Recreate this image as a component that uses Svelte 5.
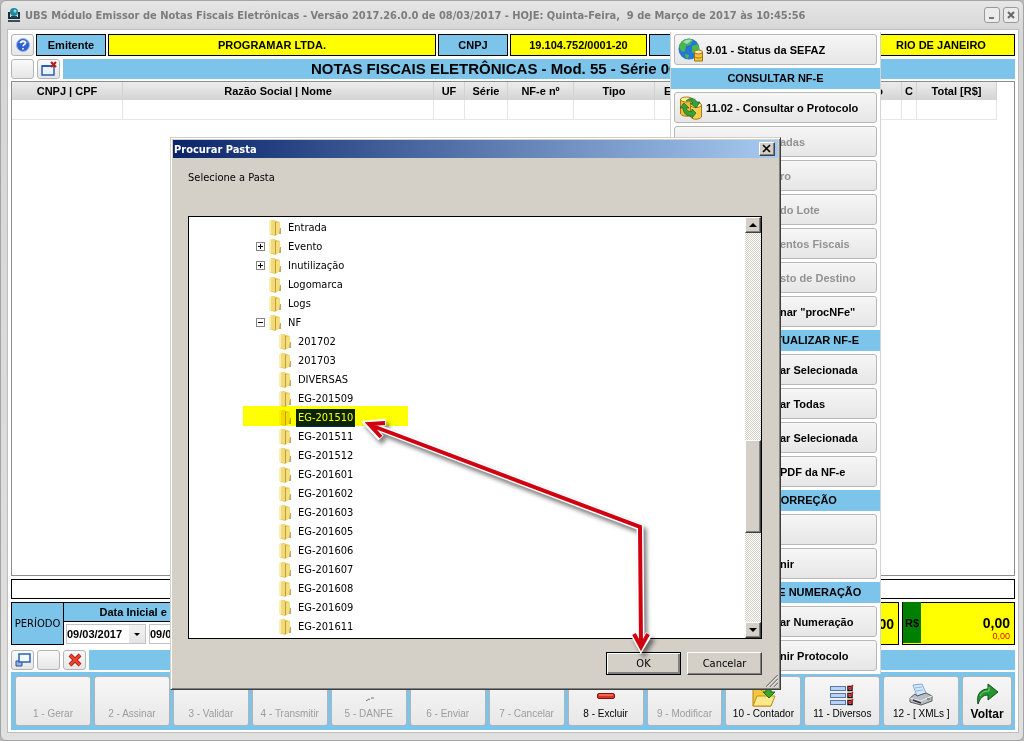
<script lang="ts">
	/**
	 * NF-e issuer main window
	 *
	 * Invoice grid with the side menu open and the folder picker on top.
	 */

	type Folder = { name: string; level: number; toggle?: '+' | '-' };

	const columns = [
		{ label: 'CNPJ | CPF', width: 111 },
		{ label: 'Razão Social | Nome', width: 0 },
		{ label: 'UF', width: 31 },
		{ label: 'Série', width: 43 },
		{ label: 'NF-e nº', width: 66 },
		{ label: 'Tipo', width: 81 },
		{ label: 'Emissão', width: 64 },
		{ label: 'Situação', width: 183, end: true },
		{ label: 'C', width: 15 },
		{ label: 'Total [R$]', width: 80 }
	];

	// Side menu: headings split the commands into groups
	const menu = [
		{ label: '9.01 - Status da SEFAZ', icon: 'globe' },
		{ heading: 'CONSULTAR NF-E' },
		{ label: '11.02 - Consultar o Protocolo', icon: 'sync' },
		{ label: 'adas', disabled: true },
		{ label: 'ro', disabled: true },
		{ label: 'do Lote', disabled: true },
		{ label: 'entos Fiscais', disabled: true },
		{ label: 'sto de Destino', disabled: true },
		{ label: 'nar "procNFe"' },
		{ heading: 'CONSULTAR / ATUALIZAR NF-E' },
		{ label: 'ar Selecionada' },
		{ label: 'ar Todas' },
		{ label: 'ar Selecionada' },
		{ label: 'PDF da NF-e' },
		{ heading: 'CARTA DE CORREÇÃO' },
		{ label: '' },
		{ label: 'nir' },
		{ heading: 'INUTILIZAÇÃO DE NUMERAÇÃO' },
		{ label: 'ar Numeração' },
		{ label: 'nir Protocolo' }
	];

	const actions = [
		{ label: '1 - Gerar', disabled: true },
		{ label: '2 - Assinar', disabled: true },
		{ label: '3 - Validar', disabled: true },
		{ label: '4 - Transmitir', disabled: true },
		{ label: '5 - DANFE', disabled: true, icon: 'danfe' },
		{ label: '6 - Enviar', disabled: true },
		{ label: '7 - Cancelar', disabled: true },
		{ label: '8 - Excluir', icon: 'minus' },
		{ label: '9 - Modificar', disabled: true },
		{ label: '10 - Contador', icon: 'folder' },
		{ label: '11 - Diversos', icon: 'checks' },
		{ label: '12 - [ XMLs ]', icon: 'printer' }
	];

	const folders: Folder[] = [
		{ name: 'Entrada', level: 1 },
		{ name: 'Evento', level: 1, toggle: '+' },
		{ name: 'Inutilização', level: 1, toggle: '+' },
		{ name: 'Logomarca', level: 1 },
		{ name: 'Logs', level: 1 },
		{ name: 'NF', level: 1, toggle: '-' },
		...[
			'201702', '201703', 'DIVERSAS', 'EG-201509', 'EG-201510', 'EG-201511',
			'EG-201512', 'EG-201601', 'EG-201602', 'EG-201603', 'EG-201605', 'EG-201606',
			'EG-201607', 'EG-201608', 'EG-201609', 'EG-201611', ''
		].map((name) => ({ name, level: 2 }))
	];

	let selected = $state('EG-201510');
</script>

<div class="window">
	<header class="titlebar">
		<svg class="app-icon" viewBox="0 0 12 14" aria-hidden="true">
			<path d="M0 4h2v5h8V4h2v7H0z" fill="#1c2f3d" />
			<circle cx="6" cy="4" r="4" fill="#1d8a9c" />
			<circle cx="7" cy="3" r="1.5" fill="#8edbe4" />
			<path d="M3 8h6v2H3z" fill="#1c4658" />
			<path d="M0 12h12v2H0z" fill="#3c4d58" />
		</svg>
		<h1>UBS Módulo Emissor de Notas Fiscais Eletrônicas - Versão 2017.26.0.0 de 08/03/2017 - HOJE: Quinta-Feira,  9 de Março de 2017 às 10:45:56</h1>
		<button class="win-button" aria-label="Minimizar">
			<svg viewBox="0 0 14 14"><path d="M4 10h5" stroke="#777" stroke-width="2" /></svg>
		</button>
		<button class="win-button" aria-label="Fechar">
			<svg viewBox="0 0 14 14"><path d="M4 4l6 6M10 4l-6 6" stroke="#666" stroke-width="2" /></svg>
		</button>
	</header>

	<main class="panel">
		<div class="row issuer">
			<button class="tool" aria-label="Ajuda">
				<svg viewBox="0 0 16 16">
					<circle cx="8" cy="8" r="6.5" fill="#2f62d0" stroke="#9db8ea" />
					<path d="M3 6a6 5 0 0 1 10 0" fill="#7ea4ee" />
					<path d="M5.7 6.3c0-3 4.7-3 4.7-.3 0 1.7-2.3 1.6-2.3 3.3M8 11v1.5" fill="none" stroke="#fff" stroke-width="1.6" />
				</svg>
			</button>
			<div class="cell blue w-label">Emitente</div>
			<div class="cell yellow grow">PROGRAMAR LTDA.</div>
			<div class="cell blue w-label">CNPJ</div>
			<div class="cell yellow w-number">19.104.752/0001-20</div>
			<div class="cell blue w-city-label"></div>
			<div class="cell yellow w-city">RIO DE JANEIRO</div>
		</div>

		<div class="row heading-row">
			<button class="tool" aria-label="Opções"></button>
			<button class="tool" aria-label="Fechar janela">
				<svg viewBox="0 0 18 16">
					<path d="M2 5h12v9H2z" fill="#eaf4ff" stroke="#2a5fb4" stroke-width="1.5" />
					<path d="M2 5h10" stroke="#2a5fb4" stroke-width="2" />
					<path d="M11 1l5 5M16 1l-5 5" stroke="#b41c1c" stroke-width="2.2" />
				</svg>
			</button>
			<h2 class="strip">NOTAS FISCAIS ELETRÔNICAS - Mod. 55 - Série 001</h2>
		</div>

		<div class="grid-box">
			<table>
				<colgroup>
					{#each columns as col}
						<col style:width={col.width ? `${col.width}px` : 'auto'} />
					{/each}
				</colgroup>
				<thead>
					<tr>
						{#each columns as col}
							<th class:end={col.end}>{col.label}</th>
						{/each}
					</tr>
				</thead>
				<tbody>
					<tr>
						{#each columns as _}
							<td></td>
						{/each}
					</tr>
				</tbody>
			</table>
		</div>

		<div class="message"></div>

		<div class="row period">
			<div class="cell blue period-label">PERÍODO</div>
			<div class="dates">
				<div class="dates-title">Data Inicial e Final</div>
				<div class="dates-fields">
					{#each ['Data inicial', 'Data final'] as label}
						<div class="date">
							<select aria-label={label}><option>09/03/2017</option></select>
							<svg viewBox="0 0 6 3" aria-hidden="true"><path d="M0 0h6L3 3z" /></svg>
						</div>
					{/each}
				</div>
			</div>
			<div class="total"><strong>0,00</strong></div>
			<div class="total money">
				<span class="currency">R$</span>
				<strong>0,00</strong>
				<small>0,00</small>
			</div>
		</div>

		<div class="row tools">
			<button class="tool" aria-label="Restaurar">
				<svg viewBox="0 0 18 16">
					<path d="M2 9h6v5H2z" fill="#8fb4e0" stroke="#2a4f94" />
					<path d="M5 2h11v8H5z" fill="#f2f9ff" stroke="#2a62b8" stroke-width="1.5" />
				</svg>
			</button>
			<button class="tool" aria-label="Opções"></button>
			<button class="tool" aria-label="Excluir">
				<svg viewBox="0 0 18 16">
					<path d="M4 3l10 10M14 3L4 13" stroke="#8c1a10" stroke-width="4" />
					<path d="M4 3l10 10M14 3L4 13" stroke="#f0402a" stroke-width="2.5" />
				</svg>
			</button>
			<div class="strip"></div>
		</div>

		<nav class="actions">
			{#each actions as action}
				<button class="action" disabled={action.disabled}>
					{#if action.icon === 'danfe'}
						<svg viewBox="0 0 28 26"><path d="M11 20l3-2 1 .5M16 17h3" fill="none" stroke="#777" /></svg>
					{:else if action.icon === 'minus'}
						<svg viewBox="0 0 28 26">
							<rect x="5.5" y="12.5" width="17" height="5" rx="1.5" fill="#e03020" stroke="#7c1410" />
							<path d="M7 14h14" stroke="#f8a090" />
						</svg>
					{:else if action.icon === 'folder'}
						<svg viewBox="0 0 28 26">
							<path d="M4 25V8h7l2 2h9v15z" fill="#f3c63c" stroke="#b8860b" />
							<path d="M4 25L8 15h18l-4 10z" fill="#fde98a" stroke="#c09018" />
							<path d="M17 5h5v6h4l-6 6-6-6h3z" fill="#3ea82a" stroke="#1d6c14" />
						</svg>
					{:else if action.icon === 'checks'}
						<svg viewBox="0 0 28 26">
							{#each [5, 12, 19] as y}
								<rect x="2.5" y={y + 0.5} width="15" height="4" fill="#b9d2f4" stroke="#5377ae" />
								<rect x="20" y={y + 0.5} width="4" height="4" fill="#fff" stroke="#111" stroke-width="1.5" />
								<path d="M20 {y + 1}l2 2 3-4" fill="none" stroke="#d81818" stroke-width="1.5" />
							{/each}
						</svg>
					{:else if action.icon === 'printer'}
						<svg viewBox="0 0 28 26">
							<path d="M6 4l9-1 4 9-9 3z" fill="#d4e8fb" stroke="#86a9d0" />
							<path d="M8 7l7-1M9 10l7-1" stroke="#8db8e8" />
							<path d="M3 17l5-4 2 2 9-3 6 3v5l-11 4-11-3z" fill="#b9bdc4" stroke="#555b66" />
							<path d="M3 17l11 3 11-5" fill="none" stroke="#eef0f4" />
							<path d="M6 19l8 3" stroke="#333" stroke-width="1.5" />
							<path d="M20 18h3" stroke="#4c9a3c" stroke-width="1.5" />
						</svg>
					{/if}
					<span>{action.label}</span>
				</button>
			{/each}
			<button class="action back">
				<svg viewBox="0 0 28 26">
					<path d="M5 23C3 13 8 8 15 8V3l10 8-10 8v-5c-5 0-8 3-10 9z" fill="#25962f" stroke="#0d4f18" />
					<path d="M7 15c2-4 5-5 9-5V6" fill="none" stroke="#7ed07c" />
				</svg>
				<span>Voltar</span>
			</button>
		</nav>
	</main>

	<aside class="menu">
		{#each menu as item}
			{#if item.heading}
				<h3>{item.heading}</h3>
			{:else}
				<button disabled={item.disabled} class:tail={!item.icon}>
					{#if item.icon === 'globe'}
						<svg viewBox="0 0 26 26">
							<circle cx="11" cy="12" r="10.5" fill="#2477d4" />
							<path d="M1 10C3 3 9 0 15 3l-3 5-4 1-1 5-3 1zM14 9l6-2c2 5 1 8-2 11l-4-3zM7 17l4 1-1 4c-2-1-3-2-3-5z" fill="#4cb648" />
							<path d="M5 5c3-3 7-3 9-2l-5 4z" fill="#c4ecf4" opacity=".7" />
							<path d="M16.5 15v9h8v-9z" fill="#f4c63a" stroke="#a07010" />
							<ellipse cx="20.5" cy="15" rx="4" ry="2" fill="#fff0a0" stroke="#a07010" />
							<path d="M16.5 19.5c2 2 6 2 8 0" fill="none" stroke="#a07010" />
						</svg>
					{:else if item.icon === 'sync'}
						<svg viewBox="0 0 26 26">
							<path d="M2.5 4v15c3 3 9 3 12 0V4z" fill="#f1bf34" stroke="#a8780c" />
							<ellipse cx="8.5" cy="4.5" rx="6" ry="2.5" fill="#fff1a4" stroke="#a8780c" />
							<path d="M12.5 10v12c3 3 8 3 11 0V10z" fill="#f6cf50" stroke="#a8780c" />
							<ellipse cx="18" cy="10" rx="5.5" ry="2.5" fill="#fff1a4" stroke="#a8780c" />
							<path d="M8 6c4-4 9-3 11 1h3l-4 6-6-5h3c-1-2-3-3-7-2zM2 13l4-5 5 5H8c1 3 3 4 6 3v-2l4 4-4 5v-2c-5 1-9-3-9-8z" fill="#3aa03a" stroke="#17611c" stroke-width=".7" />
						</svg>
					{/if}
					<span>{item.label}</span>
				</button>
			{/if}
		{/each}
	</aside>

	<section class="dialog" role="dialog" aria-labelledby="dialog-title">
		<div class="dialog-title">
			<h2 id="dialog-title">Procurar Pasta</h2>
			<button class="classic close" aria-label="Fechar">
				<svg viewBox="0 0 12 10"><path d="M2 1l7 7M9 1L2 8" stroke="#000" stroke-width="1.6" /></svg>
			</button>
		</div>
		<div class="dialog-body">
			<p id="tree-label">Selecione a Pasta</p>
			<div class="tree-box">
				<ul class="tree" aria-labelledby="tree-label">
					{#each folders as folder}
						<li class:child={folder.level === 2} class:marked={folder.name === 'EG-201510'}>
							<span class="toggle">
								{#if folder.toggle}
									<svg viewBox="0 0 9 9">
										<rect x=".5" y=".5" width="8" height="8" fill="#fff" stroke="#848484" />
										<path d={folder.toggle === '+' ? 'M2 4.5h5M4.5 2v5' : 'M2 4.5h5'} stroke="#000" />
									</svg>
								{/if}
							</span>
							<svg class="folder" viewBox="0 0 14 16" aria-hidden="true">
								<path d="M1 1l5-1 2 1 4 1v11l-2 1-3 2-6-2z" fill="#e3c658" />
								<path d="M1 1h2v13H1z" fill="#faf0b4" />
								<path d="M3 1l3-1 1 2v13l-4-1z" fill="#f0da7c" />
								<path d="M8 3l4-1v11l-4 2z" fill="#f4df7c" />
								<path d="M12 8h1v6h-2z" fill="#b9a76c" />
								<path d="M7.5 2v13" stroke="#c39d30" />
							</svg>
							{#if folder.name}
								<button
									class="name"
									class:selected={folder.name === selected}
									onclick={() => (selected = folder.name)}>{folder.name}</button>
							{/if}
						</li>
					{/each}
				</ul>
				<div class="scrollbar">
					<button class="classic" aria-label="Rolar para cima">
						<svg viewBox="0 0 8 4"><path d="M0 4l4-4 4 4z" /></svg>
					</button>
					<div class="track-before"></div>
					<div class="classic thumb"></div>
					<div class="track-after"></div>
					<button class="classic" aria-label="Rolar para baixo">
						<svg viewBox="0 0 8 4"><path d="M0 0h8L4 4z" /></svg>
					</button>
				</div>
			</div>
			<div class="dialog-buttons">
				<button class="classic default">OK</button>
				<button class="classic">Cancelar</button>
			</div>
		</div>
		<svg class="grip" viewBox="0 0 12 12" aria-hidden="true">
			<path d="M0 12L12 0M4 12l8-8M8 12l4-4" stroke="#808080" stroke-width="1.5" />
			<path d="M1 12L12 1M5 12l7-7M9 12l3-3" stroke="#fff" stroke-width=".7" />
		</svg>
		<svg class="arrow" viewBox="0 0 300 250" aria-hidden="true">
			<g class="arrow-shape" fill="none">
				<path d="M8 13L280 116 281 234M26 11L8 13l13 14M274 223l7 13 8-13" stroke="#fff" stroke-width="7" />
				<path d="M10 14L280 116 281 234M25 12L9 13l12 13M274 223l7 13 7-13" stroke="#d00010" stroke-width="4" />
			</g>
		</svg>
	</section>
</div>

<style>
	:global(body) {
		margin: 0;
		background: #b8b8b8;
	}

	.window {
		--blue: #7cc4ea;
		position: relative;
		display: flex;
		flex-direction: column;
		box-sizing: border-box;
		min-height: 100vh;
		border: 1px solid #a4a4a4;
		border-radius: 6px;
		background: linear-gradient(#e6e6e6 0, #d6d6d6 30px, #e0e0e0 100%);
		font-family: 'Liberation Sans', Arial, sans-serif;
		font-size: 11px;
		font-weight: bold;
		color: #000;
		overflow: hidden;
	}

	h1,
	h2,
	h3,
	p,
	ul {
		margin: 0;
		padding: 0;
	}

	button,
	select {
		box-sizing: border-box;
		margin: 0;
		padding: 0;
		font: inherit;
		color: inherit;
	}

	.titlebar {
		display: flex;
		align-items: center;
		gap: 3px;
		height: 28px;
		padding: 0 4px 0 7px;
	}

	.app-icon {
		width: 12px;
		height: 14px;
	}

	h1 {
		flex: 1;
		padding-left: 2px;
		font: bold 11px 'DejaVu Sans Condensed', 'DejaVu Sans', sans-serif;
		color: #7c7c7c;
		white-space: pre;
		overflow: hidden;
	}

	.win-button {
		width: 16px;
		height: 16px;
		border: 1px solid #999;
		border-radius: 3px;
		background: #ececec;
	}

	.win-button svg {
		display: block;
	}

	.panel {
		flex: 1;
		display: flex;
		flex-direction: column;
		margin: 0 4px 7px 6px;
		padding: 4px 3px 2px;
		border: 1px solid #bdbdbd;
		background: #fff;
	}

	.row {
		display: flex;
		gap: 2px;
	}

	.issuer {
		height: 22px;
		margin-bottom: 3px;
	}

	.heading-row,
	.tools {
		gap: 3px;
		height: 20px;
		margin-bottom: 2px;
	}

	.tool {
		display: flex;
		align-items: center;
		justify-content: center;
		width: 23px;
		border: 1px solid #b4b4b4;
		border-radius: 3px;
		background: linear-gradient(#fafafa, #e6e6e6);
	}

	.tool svg {
		width: 18px;
		height: 16px;
	}

	.cell {
		display: flex;
		align-items: center;
		justify-content: center;
		box-sizing: border-box;
		border: 1px solid #000;
	}

	.blue {
		background: var(--blue);
	}

	.yellow {
		background: #ff0;
	}

	.grow {
		flex: 1;
	}

	.w-label {
		width: 70px;
	}

	.w-number {
		width: 137px;
	}

	.w-city-label {
		width: 216px;
	}

	.w-city {
		width: 148px;
	}

	.strip {
		flex: 1;
		padding-left: 248px;
		background: var(--blue);
		font-size: 15px;
		line-height: 20px;
		white-space: nowrap;
	}

	.grid-box {
		flex: 1;
		margin-bottom: 3px;
		padding-right: 17px;
		border: 1px solid #8c8c8c;
	}

	table {
		width: 100%;
		table-layout: fixed;
		border-collapse: separate;
		border-spacing: 0;
	}

	th {
		box-sizing: border-box;
		height: 18px;
		padding: 0;
		border-right: 1px solid #d2d2d2;
		background: linear-gradient(#ececec, #d4d4d4);
		white-space: nowrap;
		overflow: hidden;
	}

	th.end {
		padding-right: 18px;
		text-align: right;
	}

	td {
		box-sizing: border-box;
		height: 20px;
		padding: 0;
		border-right: 1px solid #e6e6e6;
		border-bottom: 1px solid #e6e6e6;
	}

	.message {
		box-sizing: border-box;
		height: 20px;
		margin-bottom: 3px;
		border: 1px solid #000;
	}

	.period {
		height: 43px;
		gap: 0;
		margin-bottom: 5px;
	}

	.period-label {
		width: 53px;
		font: 10px 'DejaVu Sans', sans-serif;
	}

	.dates {
		flex: 1;
		display: flex;
		flex-direction: column;
	}

	.dates-title {
		box-sizing: border-box;
		width: 168px;
		height: 20px;
		border: 1px solid #000;
		border-left: 0;
		background: var(--blue);
		line-height: 18px;
		text-align: center;
	}

	.dates-fields {
		display: flex;
		gap: 3px;
		padding: 2px;
	}

	.date {
		display: grid;
		align-items: center;
	}

	.date select {
		grid-area: 1 / 1;
		width: 80px;
		height: 20px;
		border: 1px solid #c4c4c4;
		border-radius: 0;
		appearance: none;
		background: linear-gradient(#f2f2f2, #e4e4e4) right / 16px 100% no-repeat #fff;
	}

	.date svg {
		grid-area: 1 / 1;
		justify-self: end;
		width: 6px;
		height: 3px;
		margin-right: 6px;
		pointer-events: none;
	}

	.total {
		display: grid;
		align-items: center;
		box-sizing: border-box;
		width: 113px;
		margin-left: 3px;
		padding-right: 4px;
		border: 1px solid #000;
		background: #ff0;
		text-align: right;
	}

	.total strong {
		font-size: 14px;
	}

	.money {
		grid-template: 27px 12px / 18px 1fr;
	}

	.money strong {
		padding-top: 12px;
	}

	.money small {
		grid-column: 2;
		font-size: 9px;
		font-weight: normal;
		color: #f00000;
	}

	.currency {
		display: flex;
		align-items: center;
		justify-content: center;
		grid-row: 1 / 3;
		height: 41px;
		background: #008000;
	}

	.actions {
		display: flex;
		gap: 3px;
		padding: 4px 3px 4px 4px;
		background: var(--blue);
	}

	.action {
		flex: 76 1 0;
		display: flex;
		flex-direction: column;
		align-items: center;
		justify-content: flex-end;
		height: 50px;
		padding-bottom: 4px;
		border: 1px solid #b0b4b8;
		border-radius: 3px;
		background: linear-gradient(#f6f6f6, #e8e8e8);
		font-size: 10px;
		font-weight: normal;
		line-height: 14px;
		white-space: nowrap;
	}

	.action:disabled {
		color: #9c9c9c;
	}

	.action svg {
		width: 28px;
		height: 26px;
	}

	.back {
		flex-grow: 49;
		font-size: 12px;
		font-weight: bold;
	}

	.menu {
		position: absolute;
		top: 31px;
		right: 142px;
		display: flex;
		flex-direction: column;
		gap: 3px;
		box-sizing: border-box;
		width: 211px;
		padding: 2px 0 3px;
		border-right: 1px solid #d4d4d4;
		border-left: 1px solid #d4d4d4;
		background: #fff;
	}

	.menu h3 {
		background: var(--blue);
		font-size: 11px;
		line-height: 21px;
		text-align: center;
	}

	.menu button {
		display: flex;
		align-items: center;
		gap: 2px;
		height: 31px;
		margin: 0 3px;
		padding: 0 3px;
		border: 1px solid #b8b8b8;
		border-radius: 3px;
		background: linear-gradient(#f6f6f6, #e6e6e6);
		white-space: nowrap;
	}

	.menu button:disabled {
		color: #929292;
	}

	.menu .tail {
		padding-left: 105px;
	}

	.menu svg {
		width: 26px;
		height: 26px;
	}

	.dialog {
		position: absolute;
		top: 136px;
		left: 169px;
		display: flex;
		flex-direction: column;
		box-sizing: border-box;
		width: 611px;
		height: 553px;
		padding: 2px;
		border: 1px solid;
		border-color: #d4d0c8 #404040 #404040 #d4d0c8;
		background: #d4d0c8;
		box-shadow: inset 1px 1px #fff, inset -1px -1px #808080;
		font: 11px 'DejaVu Sans Condensed', 'DejaVu Sans', sans-serif;
	}

	.dialog-title {
		display: flex;
		align-items: center;
		height: 18px;
		padding: 0 3px 0 1px;
		background: linear-gradient(to right, #0a246a, #a6caf0);
	}

	.dialog-title h2 {
		flex: 1;
		font-size: 11px;
		color: #fff;
	}

	.classic {
		display: flex;
		align-items: center;
		justify-content: center;
		box-sizing: border-box;
		border: 1px solid;
		border-color: #fff #404040 #404040 #fff;
		background: #d4d0c8;
		box-shadow: inset -1px -1px #808080;
	}

	.close {
		width: 16px;
		height: 14px;
	}

	.close svg {
		width: 12px;
		height: 10px;
	}

	.dialog-body {
		flex: 1;
		display: flex;
		flex-direction: column;
		min-height: 0;
		padding: 13px 16px 12px 15px;
	}

	.dialog-body p {
		height: 45px;
		line-height: 14px;
	}

	.tree-box {
		flex: 1;
		display: flex;
		min-height: 0;
		border: 1px solid #000;
		background: #fff;
	}

	.tree {
		flex: 1;
		padding-top: 1px;
		list-style: none;
		overflow: hidden;
	}

	li {
		position: relative;
		display: flex;
		align-items: center;
		height: 19px;
		padding-left: 67px;
	}

	.child {
		padding-left: 77px;
	}

	/* highlighter stroke over the folder to pick */
	.marked::after {
		content: '';
		position: absolute;
		inset: -2px auto 1px 54px;
		width: 165px;
		background: #ff0;
		mix-blend-mode: multiply;
		pointer-events: none;
	}

	.toggle {
		width: 12px;
	}

	.toggle svg {
		display: block;
		width: 9px;
		height: 9px;
	}

	.folder {
		width: 14px;
		height: 16px;
		margin-right: 4px;
	}

	.name {
		height: 18px;
		padding: 0 2px;
		border: 0;
		background: none;
	}

	.selected {
		background: #0a246a;
		color: #fff;
	}

	.scrollbar {
		display: flex;
		flex-direction: column;
		width: 16px;
		background: repeating-conic-gradient(#fff 0 25%, #d4d0c8 0 50%) 0 0 / 2px 2px;
	}

	.scrollbar button {
		height: 16px;
	}

	.scrollbar svg {
		width: 8px;
		height: 4px;
	}

	.track-before {
		flex: 207;
	}

	.thumb {
		height: 93px;
	}

	.track-after {
		flex: 89;
	}

	.dialog-buttons {
		display: flex;
		justify-content: flex-end;
		gap: 6px;
		padding-top: 13px;
	}

	.dialog-buttons button {
		width: 75px;
		height: 23px;
	}

	.dialog-buttons .default {
		outline: 1px solid #000;
		outline-offset: -1px;
		box-shadow: inset 1px 1px #fff, inset -2px -2px #808080;
	}

	.grip {
		position: absolute;
		right: 2px;
		bottom: 2px;
		width: 12px;
		height: 12px;
	}

	.arrow {
		position: absolute;
		top: 273px;
		left: 189px;
		width: 300px;
		height: 250px;
		pointer-events: none;
	}

	.arrow-shape {
		filter: drop-shadow(3px 4px 2px rgba(0, 0, 0, 0.5));
	}
</style>
